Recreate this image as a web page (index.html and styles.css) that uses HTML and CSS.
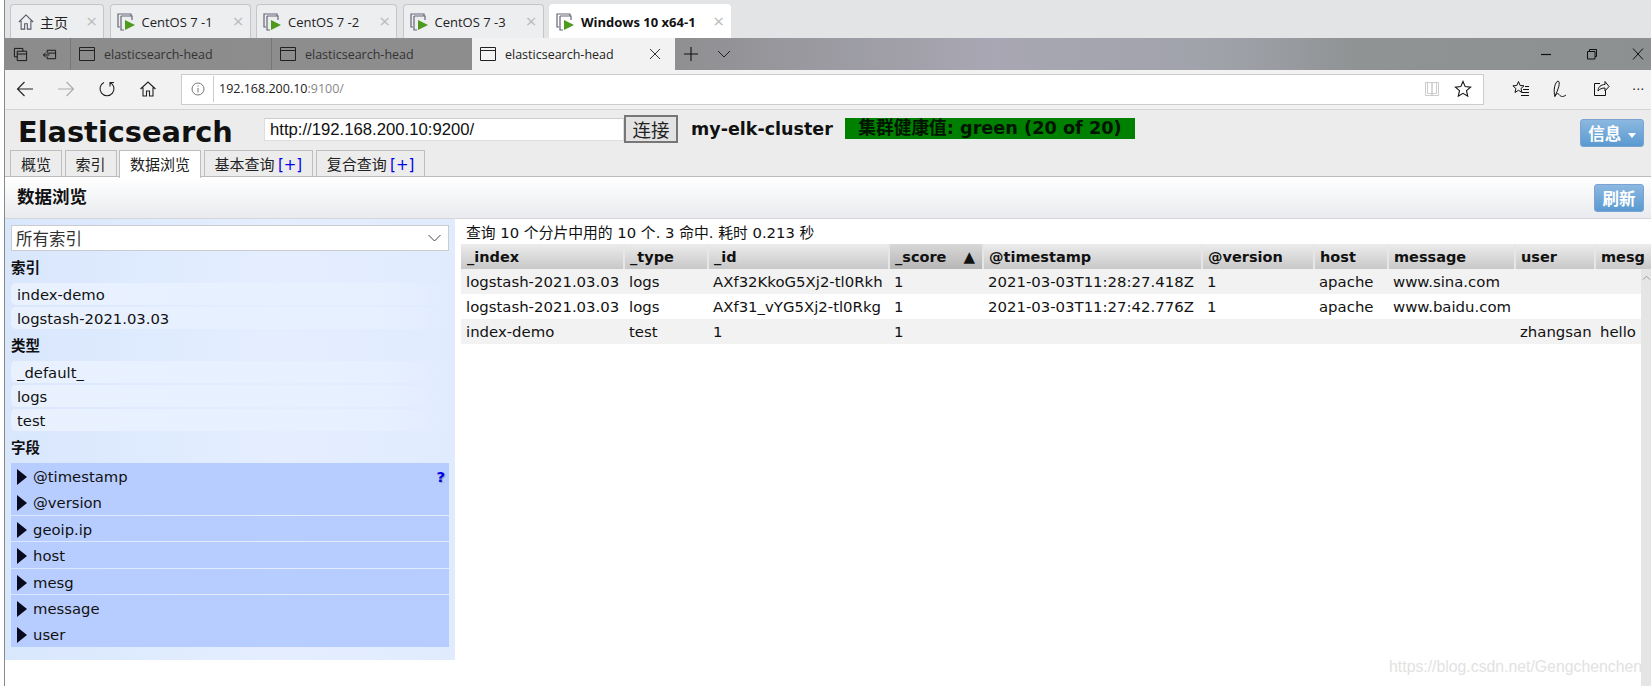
FILE: index.html
```html
<!DOCTYPE html>
<html lang="zh">
<head>
<meta charset="utf-8">
<title>elasticsearch-head</title>
<link rel="stylesheet" href="styles.css">
</head>
<body>
<div class="window">
  <div class="vm-tabs">
    <div class="vm-tab vm-home">
      <svg class="vm-ico" viewBox="0 0 18 20"><path d="M1 10 9 2l8 8M3.5 8.5V18h4v-6h3v6h4V8.5" fill="none" stroke="#556" stroke-width="1.2"/></svg>
      <span class="vm-label">主页</span><span class="vm-x">×</span>
    </div>
    <div class="vm-tab">
      <svg class="vm-ico" viewBox="0 0 20 18"><path d="M14 3V1H1v13h2M4 3h11v4M4 3v14h3" fill="none" stroke="#667" stroke-width="1.2"/><path d="M8 7l10 5-10 5z" fill="#4e9a1c"/></svg>
      <span class="vm-label">CentOS 7 -1</span><span class="vm-x">×</span>
    </div>
    <div class="vm-tab">
      <svg class="vm-ico" viewBox="0 0 20 18"><path d="M14 3V1H1v13h2M4 3h11v4M4 3v14h3" fill="none" stroke="#667" stroke-width="1.2"/><path d="M8 7l10 5-10 5z" fill="#4e9a1c"/></svg>
      <span class="vm-label">CentOS 7 -2</span><span class="vm-x">×</span>
    </div>
    <div class="vm-tab">
      <svg class="vm-ico" viewBox="0 0 20 18"><path d="M14 3V1H1v13h2M4 3h11v4M4 3v14h3" fill="none" stroke="#667" stroke-width="1.2"/><path d="M8 7l10 5-10 5z" fill="#4e9a1c"/></svg>
      <span class="vm-label">CentOS 7 -3</span><span class="vm-x">×</span>
    </div>
    <div class="vm-tab vm-active">
      <svg class="vm-ico" viewBox="0 0 20 18"><path d="M14 3V1H1v13h2M4 3h11v4M4 3v14h3" fill="none" stroke="#667" stroke-width="1.2"/><path d="M8 7l10 5-10 5z" fill="#4e9a1c"/></svg>
      <span class="vm-label">Windows 10 x64-1</span><span class="vm-x">×</span>
    </div>
  </div>

  <div class="edge-tabs">
    <div class="edge-tools">
      <svg class="ico16" viewBox="0 0 16 16"><path d="M1.5 1.5h9v3M1.5 1.5v9h3M4.5 4.5h10v10h-10zM4.5 7.5h10" fill="none" stroke="#111" stroke-width="1"/></svg>
      <svg class="ico16" viewBox="0 0 16 16"><path d="M5.5 3.5h9v9h-9V10M5.5 6V3.5M5.5 6.5h9M8 8.5H1.5M4 6 1.5 8.5 4 11" fill="none" stroke="#111" stroke-width="1"/></svg>
    </div>
    <div class="edge-tab">
      <svg class="ico16" viewBox="0 0 16 16"><path d="M.5 1.5h15v13H.5zM.5 4.5h15" fill="none" stroke="#222" stroke-width="1"/></svg>
      <span>elasticsearch-head</span>
    </div>
    <div class="edge-tab">
      <svg class="ico16" viewBox="0 0 16 16"><path d="M.5 1.5h15v13H.5zM.5 4.5h15" fill="none" stroke="#222" stroke-width="1"/></svg>
      <span>elasticsearch-head</span>
    </div>
    <div class="edge-tab edge-active">
      <svg class="ico16" viewBox="0 0 16 16"><path d="M.5 1.5h15v13H.5zM.5 4.5h15" fill="none" stroke="#222" stroke-width="1"/></svg>
      <span class="edge-title">elasticsearch-head</span>
      <svg class="ico12" viewBox="0 0 12 12"><path d="M1 1l10 10M11 1 1 11" fill="none" stroke="#333" stroke-width="1"/></svg>
    </div>
    <div class="edge-new">
      <svg class="ico16" viewBox="0 0 16 16"><path d="M8 1v14M1 8h14" fill="none" stroke="#111" stroke-width="1.1"/></svg>
      <svg class="ico14" viewBox="0 0 14 8"><path d="M1 1l6 6 6-6" fill="none" stroke="#222" stroke-width="1"/></svg>
    </div>
    <div class="win-ctl">
      <svg class="ico12" viewBox="0 0 12 12"><path d="M1 6.5h10" stroke="#111" stroke-width="1.2"/></svg>
      <svg class="ico12" viewBox="0 0 12 12"><path d="M3.500 3V1.500h7v7H9M1.500 3.500H9V11H1.500z" fill="none" stroke="#111" stroke-width="1"/></svg>
      <svg class="ico12" viewBox="0 0 12 12"><path d="M1 .5l10 11M11 .5 1 11.500" fill="none" stroke="#111" stroke-width="1"/></svg>
    </div>
  </div>

  <div class="navbar">
    <div class="nav-btns">
      <svg class="ico18" viewBox="0 0 18 18"><path d="M17 9H1.500M8.500 2 1.500 9l7 7" fill="none" stroke="#222" stroke-width="1.100"/></svg>
      <svg class="ico18" viewBox="0 0 18 18"><path d="M1 9h15.500M9.500 2l7 7-7 7" fill="none" stroke="#aaa" stroke-width="1.100"/></svg>
      <svg class="ico18" viewBox="0 0 18 18"><path d="M6 2.500A7 7 0 1 0 12 2.500M12 6.500V2.500H16" fill="none" stroke="#222" stroke-width="1.100"/></svg>
      <svg class="ico18" viewBox="0 0 18 18"><path d="M1.500 9 9 2l7.500 7M4 7.500V16h3.500v-5h3v5H14V7.500" fill="none" stroke="#222" stroke-width="1.100"/></svg>
    </div>
    <div class="address">
      <svg class="ico14 addr-info" viewBox="0 0 14 14"><circle cx="7" cy="7" r="6" fill="none" stroke="#777"/><path d="M7 6v4.500M7 3.500v1.200" stroke="#777"/></svg>
      <span class="addr-url">192.168.200.10<span class="addr-port">:9100/</span></span>
      <svg class="ico16 addr-read" viewBox="0 0 16 16"><path d="M1.500 1.500H8v13H1.500zM8 1.500h6.500v13H8zM3.500 1.500v11H8M12.500 1.500v11H8" fill="none" stroke="#ccc"/></svg>
      <svg class="ico18" viewBox="0 0 18 18"><path d="M9 1.500l2.200 5.100 5.400.500-4.100 3.600 1.200 5.400L9 13.300l-4.700 2.800 1.200-5.400L1.400 7.100l5.400-.500z" fill="none" stroke="#111" stroke-width="1.100"/></svg>
    </div>
    <div class="nav-right">
      <svg class="ico18" viewBox="0 0 18 18"><path d="M6.500 1.500l1.600 4 3.900.300-3 2.700.9 4-3.400-2.200L3 12.500l.9-4-3-2.700 3.900-.300zM11 9.500h6M10 12.500h7M9 15.500h8M13 6.500h4" fill="none" stroke="#111"/></svg>
      <svg class="ico18" viewBox="0 0 18 18"><path d="M3 17C1 10 3 2 6 1c3 1 0 9-3 15 2-3 3-3 4.500-1 1.500 2 4 2 6.500 0" fill="none" stroke="#111"/></svg>
      <svg class="ico18" viewBox="0 0 18 18"><path d="M8 3.500H2.500v12h11V11M6 11c0-4 3-6.500 7-6.500V1.500l4 5-4 4.500V8C10 8 7.500 9 6 11z" fill="none" stroke="#111"/></svg>
      <span class="dots">···</span>
    </div>
  </div>

  <div class="es">
    <div class="es-top">
      <h1 class="es-logo">Elasticsearch</h1>
      <input class="es-url" value="http://192.168.200.10:9200/">
      <button class="es-connect">连接</button>
      <span class="es-cluster">my-elk-cluster</span>
      <span class="es-health">集群健康值: green (20 of 20)</span>
      <button class="blue-btn info-btn">信息 <i class="caret"></i></button>
      <div class="es-tabs">
        <div class="es-tab">概览</div>
        <div class="es-tab">索引</div>
        <div class="es-tab es-tab-on">数据浏览</div>
        <div class="es-tab">基本查询 <span class="plus">[+]</span></div>
        <div class="es-tab">复合查询 <span class="plus">[+]</span></div>
      </div>
    </div>

    <div class="section-head">
      <h2 class="section-title">数据浏览</h2>
      <button class="blue-btn">刷新</button>
    </div>

    <div class="browser">
      <aside class="filter">
        <div class="select"><span>所有索引</span>
          <svg class="select-arrow" viewBox="0 0 14 8"><path d="M1 1l6 6 6-6" fill="none" stroke="#444" stroke-width="1"/></svg>
        </div>
        <h3 class="f-head">索引</h3>
        <div class="f-item">index-demo</div>
        <div class="f-item">logstash-2021.03.03</div>
        <h3 class="f-head">类型</h3>
        <div class="f-item">_default_</div>
        <div class="f-item">logs</div>
        <div class="f-item">test</div>
        <h3 class="f-head">字段</h3>
        <div class="field"><i class="arrow"></i>@timestamp<span class="help">?</span></div>
        <div class="field"><i class="arrow"></i>@version</div>
        <div class="field"><i class="arrow"></i>geoip.ip</div>
        <div class="field"><i class="arrow"></i>host</div>
        <div class="field"><i class="arrow"></i>mesg</div>
        <div class="field"><i class="arrow"></i>message</div>
        <div class="field"><i class="arrow"></i>user</div>
      </aside>

      <section class="results">
        <div class="summary">查询 10 个分片中用的 10 个. 3 命中. 耗时 0.213 秒</div>
        <div class="table-clip">
          <table class="grid">
            <colgroup>
              <col class="c1"><col class="c2"><col class="c3"><col class="c4"><col class="c5"><col class="c6"><col class="c7"><col class="c8"><col class="c9"><col class="c10">
            </colgroup>
            <thead>
              <tr><th>_index</th><th>_type</th><th>_id</th><th class="sorted">_score<span class="up">▲</span></th><th>@timestamp</th><th>@version</th><th>host</th><th>message</th><th>user</th><th>mesg</th></tr>
            </thead>
            <tbody>
              <tr class="odd"><td>logstash-2021.03.03</td><td>logs</td><td>AXf32KkoG5Xj2-tl0Rkh</td><td>1</td><td>2021-03-03T11:28:27.418Z</td><td>1</td><td>apache</td><td>www.sina.com</td><td></td><td></td></tr>
              <tr><td>logstash-2021.03.03</td><td>logs</td><td>AXf31_vYG5Xj2-tl0Rkg</td><td>1</td><td>2021-03-03T11:27:42.776Z</td><td>1</td><td>apache</td><td>www.baidu.com</td><td></td><td></td></tr>
              <tr class="odd"><td>index-demo</td><td>test</td><td>1</td><td>1</td><td></td><td></td><td></td><td></td><td>zhangsan</td><td>hello world</td></tr>
            </tbody>
          </table>
        </div>
        <div class="vscroll"><svg class="scroll-up" viewBox="0 0 10 6"><path d="M1 5l4-4 4 4" fill="none" stroke="#999"/></svg></div>
      </section>
    </div>
  </div>
</div>
<div class="watermark">https://blog.csdn.net/Gengchenchen</div>
</body>
</html>
```
FILE: styles.css
```css
* { box-sizing: border-box; }
html, body { margin: 0; height: 100%; overflow: hidden; background: #fff; }
body { position: relative; font-family: "DejaVu Sans", "Noto Sans CJK SC", sans-serif; color: #111; }
svg { display: block; flex: none; }
.ico12 { width: 12px; height: 12px; }
.ico14 { width: 14px; height: 14px; }
.ico16 { width: 16px; height: 16px; }
.ico18 { width: 18px; height: 18px; }

.window { margin-left: 4px; height: 686px; border-left: 1px solid #8a8a8a; }

/* VM tabs */
.vm-tabs { height: 38px; background: #e3e4e6; display: flex; align-items: flex-end; padding-left: 5px; font-family: "Open Sans", "Noto Sans CJK SC", sans-serif; }
.vm-tab { width: 141px; height: 34px; margin-right: 5.500px; display: flex; align-items: center; padding: 0 6px; background: #eceef0; border: 1px solid #c4c6c9; border-bottom: 0; border-radius: 4px 4px 0 0; font-size: 13px; color: #222; }
.vm-home { width: 94px; }
.vm-home .vm-label { font-size: 14px; }
.vm-ico { width: 20px; height: 18px; margin-right: 5px; }
.vm-home .vm-ico { width: 16px; height: 20px; margin: 0 6px 0 1px; }
.vm-label { flex: 1; white-space: nowrap; }
.vm-x { color: #bbb; font-size: 19px; line-height: 1; }
.vm-active { width: 182px; background: #fff; border-color: #fff; font-weight: 700; color: #111; }
.vm-active .vm-x { font-weight: 400; }

/* Edge tabs */
.edge-tabs { height: 32px; display: flex; align-items: stretch; background: linear-gradient(90deg, #8c8c8c 0%, #8e8e90 40%, #a8a7b3 60%, #a0a2aa 74%, #909394 82%, #8c9090 100%); font-family: "Open Sans", "Noto Sans CJK SC", sans-serif; font-size: 12.500px; color: #333; }
.edge-tools { width: 65px; display: flex; align-items: center; gap: 14px; padding-left: 8px; }
.edge-tools .ico16 { width: 15px; height: 15px; }
.edge-tab { width: 201px; display: flex; align-items: center; gap: 9px; padding-left: 8px; border-left: 1px solid #777; }
.edge-active { width: 203px; background: #f2f2f2; border-left: 0; color: #222; }
.edge-title { flex: 1; }
.edge-active .ico12 { margin-right: 14px; }
.edge-new { display: flex; align-items: center; gap: 18px; padding-left: 8px; }
.win-ctl { margin-left: auto; display: flex; align-items: center; gap: 34px; padding-right: 7px; }

/* Navigation */
.navbar { height: 40px; background: #f2f2f2; border-bottom: 1px solid #d4d4d4; display: flex; align-items: center; padding-bottom: 1px; }
.nav-btns { width: 176px; display: flex; gap: 23px; padding-left: 11px; }
.address { width: 1303px; height: 31px; background: #fff; border: 1px solid #ccc; display: flex; align-items: center; padding: 0 11px 0 9px; }
.addr-info { margin-right: 8px; }
.addr-url { flex: 1; height: 26px; line-height: 25px; border-left: 1px solid #ccc; padding-left: 5px; font-family: "Open Sans", sans-serif; font-size: 12.500px; color: #222; }
.addr-port { color: #888; }
.addr-read { margin-right: 14px; }
.nav-right { flex: 1; display: flex; align-items: center; gap: 22px; padding-left: 28px; }
.dots { font-size: 13px; color: #222; }

/* ES header */
.es-top { height: 66px; background: #ececec; position: relative; }
.es-logo { position: absolute; left: 13px; top: 4px; margin: 0; font-size: 28.800px; line-height: 36px; font-weight: 700; }
.es-url { position: absolute; left: 259px; top: 8px; width: 360px; height: 23px; border: 1px solid #ddd; border-top-color: #ccc; padding: 0 5px; font: 16.700px "Liberation Sans", sans-serif; color: #111; background: #fff; outline: 0; }
.es-connect { position: absolute; left: 619px; top: 5px; width: 54px; height: 28px; padding: 0; background: #e3e3e3; border: 2px solid #777; font: 18.500px/22px "Noto Sans CJK SC", sans-serif; color: #222; }
.es-cluster { position: absolute; left: 686px; top: 8px; font-weight: 700; font-size: 17.500px; line-height: 22px; }
.es-health { position: absolute; left: 840px; top: 8px; width: 290px; height: 21px; background: #008000; text-align: center; font-weight: 700; font-size: 17.700px; line-height: 21px; color: #001400; white-space: nowrap; }
.blue-btn { height: 28px; width: 50px; padding: 0; border: 1px solid #7aa3d4; border-radius: 3px; background: linear-gradient(#8bb8e0, #5a9ad0); color: #fff; font: 700 16.500px "Noto Sans CJK SC", sans-serif; }
.info-btn { position: absolute; right: 7px; top: 9px; width: 64px; }
.caret { display: inline-block; vertical-align: middle; margin-left: 3px; border: 4px solid transparent; border-top: 5px solid #fff; border-bottom: 0; }
.es-tabs { position: absolute; left: 5px; right: 0; bottom: 0; display: flex; height: 26px; gap: 2.500px; }
.es-tab { padding: 0 10px; height: 26px; line-height: 25px; font-size: 15px; background: #ececec; border: 1px solid #bdbdbd; border-bottom: 0; color: #222; white-space: nowrap; font-family: "Noto Sans CJK SC", sans-serif; }
.es-tab-on { height: 28px; background: #fff; z-index: 1; }
.plus { color: #0000ee; font-family: "DejaVu Sans", sans-serif; }

.section-head { height: 43px; display: flex; align-items: center; justify-content: space-between; padding: 0 7px 0 12px; background: linear-gradient(#fff, #e9ebee); border-top: 1px solid #bbb; border-bottom: 1px solid #d6d6d6; }
.section-title { margin: 0 0 4px; font-size: 17.500px; font-weight: 700; font-family: "Noto Sans CJK SC", sans-serif; }

/* Browser */
.browser { display: flex; align-items: flex-start; }
.filter { width: 450px; height: 441px; padding: 6px 6px 0; background: linear-gradient(90deg, #d9e7fd, #e4eeff 60%, #e0ebfe); font-size: 14.800px; }
.select { height: 26px; margin-bottom: 2px; background: #fff; border: 1px solid #ccc; display: flex; align-items: center; justify-content: space-between; padding: 0 6px 0 4px; font: 16.500px "Noto Sans CJK SC", sans-serif; color: #333; }
.select-arrow { width: 15px; height: 8px; }
.f-head { margin: 0; height: 30px; font: 700 14.500px/28px "Noto Sans CJK SC", sans-serif; color: #111; }
.f-item { height: 22px; line-height: 23px; margin-bottom: 2px; padding-left: 6px; border-radius: 5px 0 0 5px; background: linear-gradient(90deg, #e9f1ff, #e6f0ff 85%, rgba(230,240,255,0)); white-space: nowrap; }
.field { position: relative; height: 25.600px; line-height: 27px; margin-bottom: .800px; padding-left: 22px; background: #b8cdff; }
.arrow { position: absolute; left: 6px; top: 6px; border: 8px solid transparent; border-left: 10px solid #0a0a1e; border-right: 0; }
.help { position: absolute; right: 4px; top: 0; font-weight: 700; color: #0000e0; text-shadow: 1px 1px 1px #8899cc; }

/* Results */
.results { position: relative; flex: 1; min-width: 0; height: 467px; background: #fff; }
.summary { height: 25px; padding: 5px 0 0 11px; font: 14.800px/18px "DejaVu Sans", "Noto Sans CJK SC", sans-serif; color: #111; white-space: nowrap; }
.table-clip { margin-left: 6px; overflow: hidden; }
.grid { border-collapse: collapse; table-layout: fixed; width: 1238px; font-size: 14.900px; }
.c1 { width: 163px; } .c2 { width: 84px; } .c3 { width: 181px; } .c4 { width: 94px; } .c5 { width: 219px; }
.c6 { width: 112px; } .c7 { width: 74px; } .c8 { width: 127px; } .c9 { width: 80px; } .c10 { width: 104px; }
.grid th { height: 25px; padding: 0 5px; text-align: left; font-size: 14.500px; line-height: 20px; font-weight: 700; white-space: nowrap; background: linear-gradient(#ececec, #c8c8c8); border-right: 2px solid #e6e6e6; overflow: hidden; }
.grid th:first-child { padding-left: 6px; }
.grid th.sorted { background: linear-gradient(#d8d8d8, #b6b6b6); }
.up { float: right; margin-right: 2px; font-size: 15px; line-height: 20px; }
.grid td { height: 25px; padding: 1px 5px 0; white-space: nowrap; overflow: hidden; }
.grid tr.odd td { background: #f2f2f2; }
.vscroll { position: absolute; right: 0; top: 50px; bottom: 0; width: 10px; background: #e5e5e5; padding: 6px 0 0 1px; }
.scroll-up { width: 9px; height: 6px; }

.watermark { position: absolute; right: 9px; top: 658px; font: 15.800px "Liberation Sans", sans-serif; color: #e2e2e2; white-space: nowrap; }
```
